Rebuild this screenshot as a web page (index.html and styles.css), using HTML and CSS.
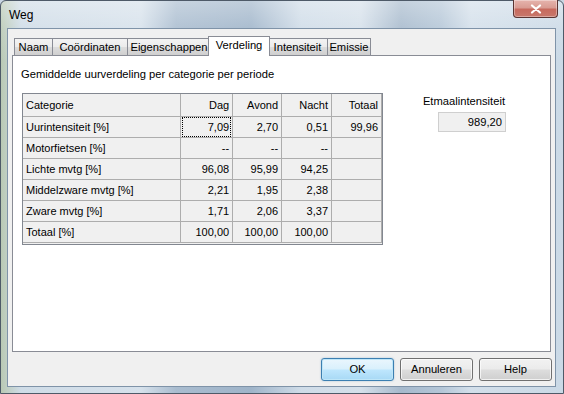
FILE: index.html
```html
<!DOCTYPE html>
<html>
<head>
<meta charset="utf-8">
<link rel="stylesheet" href="styles.css">
</head>
<body>
<div class="window">
  <div class="titlebar">
    <span class="title">Weg</span>
    <span class="close"><svg width="14" height="10" viewBox="0 0 14 10"><path d="M3 1.5 L11 8.5 M11 1.5 L3 8.5" stroke="#fff" stroke-width="2.2" stroke-linecap="round"/></svg></span>
  </div>
  <div class="client">
    <div class="tabs">
      <div class="tab t-naam">Naam</div>
      <div class="tab t-coord">Coördinaten</div>
      <div class="tab t-eig">Eigenschappen</div>
      <div class="tab active t-verd">Verdeling</div>
      <div class="tab t-int">Intensiteit</div>
      <div class="tab t-em">Emissie</div>
    </div>
    <div class="panel">
      <div class="heading">Gemiddelde uurverdeling per categorie per periode</div>
      <div class="content">
        <div class="grid">
          <table>
            <tr class="head"><td class="cat">Categorie</td><td>Dag</td><td>Avond</td><td>Nacht</td><td>Totaal</td></tr>
            <tr><td class="cat">Uurintensiteit [%]</td><td class="focus"><span>7,09</span></td><td>2,70</td><td>0,51</td><td>99,96</td></tr>
            <tr><td class="cat">Motorfietsen [%]</td><td>--</td><td>--</td><td>--</td><td></td></tr>
            <tr><td class="cat">Lichte mvtg [%]</td><td>96,08</td><td>95,99</td><td>94,25</td><td></td></tr>
            <tr><td class="cat">Middelzware mvtg [%]</td><td>2,21</td><td>1,95</td><td>2,38</td><td></td></tr>
            <tr><td class="cat">Zware mvtg [%]</td><td>1,71</td><td>2,06</td><td>3,37</td><td></td></tr>
            <tr><td class="cat">Totaal [%]</td><td>100,00</td><td>100,00</td><td>100,00</td><td></td></tr>
          </table>
        </div>
        <div class="side">
          <div class="label">Etmaalintensiteit</div>
          <div class="valuebox">989,20</div>
        </div>
      </div>
    </div>
    <div class="buttons">
      <div class="btn default">OK</div>
      <div class="btn">Annuleren</div>
      <div class="btn">Help</div>
    </div>
  </div>
</div>
</body>
</html>
```
FILE: styles.css
```css
html, body {
  margin: 0;
  padding: 0;
  width: 564px;
  height: 394px;
  overflow: hidden;
  background: #c9d6e3;
}
.window {
  box-sizing: border-box;
  width: 564px;
  height: 394px;
  border: 1px solid #4e5a68;
  border-radius: 6px 6px 0 0;
  padding: 0 7px 6px 6px;
  display: flex;
  flex-direction: column;
  background:
    linear-gradient(180deg, rgba(255,255,255,0.35) 0px, rgba(255,255,255,0.1) 30px, rgba(255,255,255,0) 60px),
    linear-gradient(90deg, #b9c9b4 0px, #cfdce7 20px, #d6e1eb 140px, #a9bccf 175px, #9fb4c9 250px, #cfdce8 300px, #d5e0ea 360px, #a6b9cc 400px, #b4c6d7 440px, #d3dfea 470px, #cad9e6 564px);
  font-family: "Liberation Sans", Arial, sans-serif;
  font-size: 11.2px;
  color: #000;
}
.titlebar {
  height: 27px;
  display: flex;
  align-items: flex-start;
}
.title {
  margin-left: 2px;
  line-height: 28px;
  font-size: 12px;
}
.close {
  margin-left: auto;
  margin-right: -2px;
  margin-top: -1px;
  width: 45px;
  height: 18px;
  box-sizing: border-box;
  border: 1px solid #5a3432;
  border-top: none;
  border-radius: 0 0 4px 4px;
  background: linear-gradient(180deg, #e6b4ad 0%, #d99c93 45%, #c76a5e 55%, #c8786c 100%);
  box-shadow: inset 0 0 0 1px rgba(255,255,255,0.35);
  display: flex;
  align-items: center;
  justify-content: center;
}
.client {
  flex: 1;
  background: #f0f0f0;
  border: 1px solid #7f93a8;
  padding: 7px 3px 4px 4px;
  display: flex;
  flex-direction: column;
}
.tabs {
  display: flex;
  align-items: flex-end;
  padding-left: 2px;
  height: 19px;
  position: relative;
  z-index: 1;
}
.tab {
  height: 17px;
  line-height: 16px;
  padding: 0;
  text-align: center;
  box-sizing: border-box;
  border: 1px solid #898c95;
  border-bottom: none;
  border-right: none;
  background: linear-gradient(180deg, #f3f3f3 0%, #ebebeb 50%, #dddddd 51%, #cfcfcf 100%);
  white-space: nowrap;
}
.tab:last-child { border-right: 1px solid #898c95; }
.t-naam { width: 38px; }
.t-coord { width: 75px; }
.t-eig { width: 83px; }
.t-verd { width: 62px; }
.t-int { width: 59px; }
.t-em { width: 44px; }
.tab.active {
  height: 20px;
  margin: 0 -2px -1px -2px;
  background: #fff;
  border-right: 1px solid #898c95;
  line-height: 17px;
  position: relative;
  z-index: 2;
}
.tab.active + .tab { border-left: none; }
.panel {
  height: 297px;
  box-sizing: border-box;
  margin-right: 1px;
  background: #fff;
  border: 1px solid #898c95;
  padding: 10px 8px 0 8px;
}
.heading {
  height: 16px;
  line-height: 16px;
}
.content {
  display: flex;
  margin-top: 11px;
}
.grid {
  margin-left: 1px;
  width: 361px;
  height: 152px;
  box-sizing: border-box;
  border: 1px solid #828790;
  background: #f0f0f0;
}
table {
  border-collapse: collapse;
  font-family: "Liberation Sans", Arial, sans-serif;
  font-size: 11px;
}
td {
  height: 21px;
  padding: 0 3px 0 3px;
  text-align: right;
  background: #f0f0f0;
  border: 1px solid #adadad;
  box-sizing: border-box;
  white-space: nowrap;
}
tr:first-child td { border-top: none; }
td:first-child { border-left: none; }
tr.head td { height: 22px; }
td.cat { width: 158px; text-align: left; padding-left: 3px; }
td:nth-child(2) { width: 52px; }
td:nth-child(3) { width: 49px; }
td:nth-child(4) { width: 50px; }
td:nth-child(5) { width: 50px; }
td.focus { padding: 0; }
td.focus span {
  display: block;
  margin: 0 1px 0 1px;
  height: 18px;
  line-height: 18px;
  padding-right: 1px;
  border: 1px dotted #000;
  background: #f0f0f0;
}
.side {
  margin-left: auto;
  margin-right: 36px;
  margin-top: 0;
  display: flex;
  flex-direction: column;
  align-items: flex-end;
}
.label {
  line-height: 16px;
  margin-right: 1px;
}
.valuebox {
  margin-top: 3px;
  width: 68px;
  height: 20px;
  box-sizing: border-box;
  border: 1px solid #cfcfcf;
  background: #f0f0f0;
  text-align: right;
  padding-right: 3px;
  line-height: 18px;
}
.buttons {
  display: flex;
  justify-content: flex-end;
  margin-top: 6px;
  gap: 6px;
}
.btn {
  width: 73px;
  height: 23px;
  box-sizing: border-box;
  border: 1px solid #707070;
  border-radius: 3px;
  background: linear-gradient(180deg, #f2f2f2 0%, #ebebeb 48%, #dddddd 52%, #cfcfcf 100%);
  box-shadow: inset 0 0 0 1px rgba(255,255,255,0.7);
  text-align: center;
  line-height: 21px;
}
.btn.default {
  border-color: #3c7fb1;
  background: linear-gradient(180deg, #eaf6fd 0%, #d9f0fc 48%, #bee6fd 52%, #a7d9f5 100%);
  box-shadow: inset 0 0 0 1px #bfe6f8, 0 0 2px rgba(60,127,177,0.4);
}
```
